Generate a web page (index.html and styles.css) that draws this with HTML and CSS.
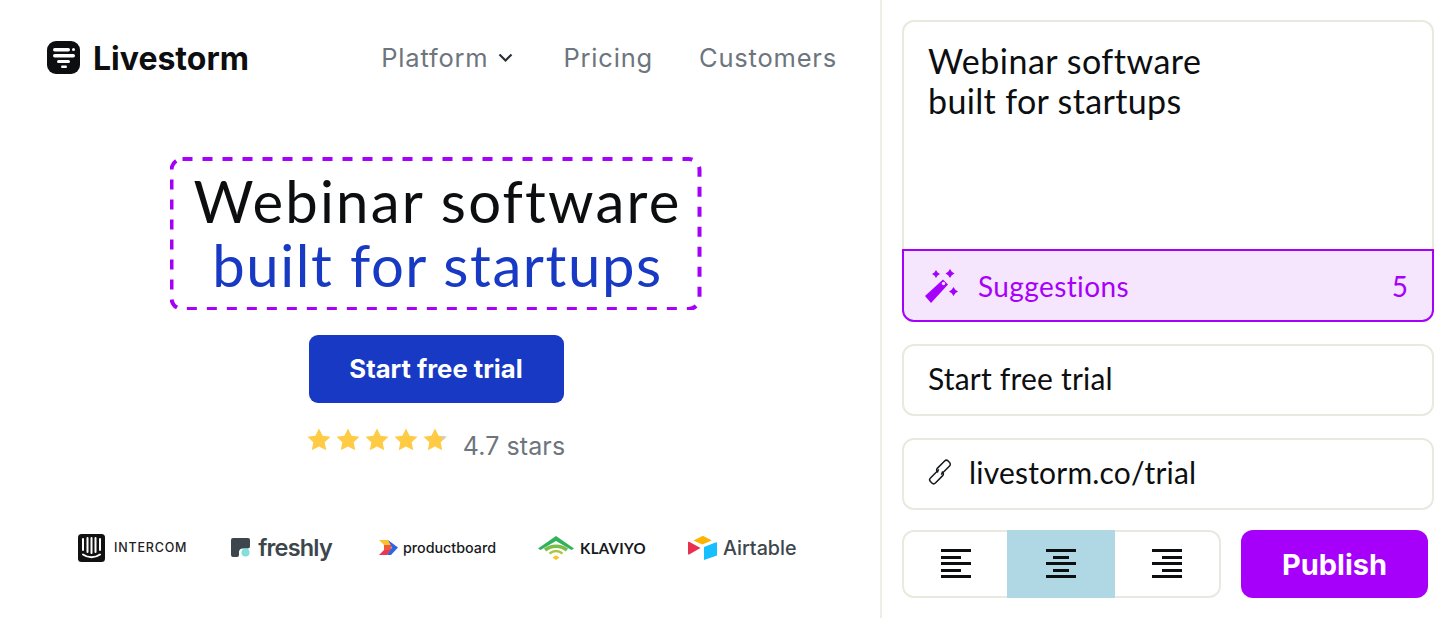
FILE: index.html
```html
<!doctype html>
<html lang="en">
  <head>
    <meta charset="UTF-8" />
    <meta name="viewport" content="width=device-width, initial-scale=1.0" />
    <title>Livestorm page editor</title>
    <link rel="stylesheet" href="styles.css">
  </head>
  <body>
    <div class="page">
      <section class="preview">
        <header class="nav">
          <div class="brand">
            <svg class="brand-icon" width="33" height="33" viewBox="0 0 33 33">
              <rect width="33" height="33" rx="9" fill="#0c0e10"/>
              <rect x="6" y="7" width="17" height="3.500" rx="1.700" fill="#fff"/>
              <rect x="25" y="7" width="3" height="3" rx="1.500" fill="#fff"/>
              <rect x="6" y="13" width="22" height="3.500" rx="1.700" fill="#fff"/>
              <rect x="10" y="19" width="13" height="3" rx="1.500" fill="#fff"/>
              <rect x="14" y="24.500" width="6" height="2.500" rx="1.200" fill="#fff"/>
            </svg>
            <span class="brand-name">Livestorm</span>
          </div>
          <nav class="nav-links">
            <a class="nav-link nav-platform">Platform
              <svg width="15" height="10" viewBox="0 0 15 10"><path d="M1.500 1.500 7.500 7.500l6-6" fill="none" stroke="#2b3036" stroke-width="2.200"/></svg>
            </a>
            <a class="nav-link">Pricing</a>
            <a class="nav-link">Customers</a>
          </nav>
        </header>

        <div class="hero">
          <div class="headline-box">
            <svg class="dashes" width="532" height="153" viewBox="0 0 532 153">
              <rect x="1.500" y="2" width="528" height="150" rx="11" fill="none" stroke="#a600fa" stroke-width="4" stroke-dasharray="10 10"/>
            </svg>
            <h1 class="headline">Webinar software<br><span class="headline-blue">built for startups</span></h1>
          </div>
          <a class="cta">Start free trial</a>
          <div class="rating">
            <svg class="stars" width="140" height="24" viewBox="0 0 140 24">
              <g fill="#ffcb45">
                <path d="M12 .500l3.600 7.300 7.900 1-5.800 5.500 1.500 8L12 18.400l-7.200 3.900 1.500-8L.500 8.800l7.900-1z"/>
                <path transform="translate(29)" d="M12 .500l3.600 7.300 7.900 1-5.800 5.500 1.500 8L12 18.400l-7.200 3.900 1.500-8L.500 8.800l7.900-1z"/>
                <path transform="translate(58)" d="M12 .500l3.600 7.300 7.900 1-5.800 5.500 1.500 8L12 18.400l-7.200 3.900 1.500-8L.500 8.800l7.900-1z"/>
                <path transform="translate(87)" d="M12 .500l3.600 7.300 7.900 1-5.800 5.500 1.500 8L12 18.400l-7.200 3.900 1.500-8L.500 8.800l7.900-1z"/>
                <path transform="translate(116)" d="M12 .500l3.600 7.300 7.900 1-5.800 5.500 1.500 8L12 18.400l-7.200 3.900 1.500-8L.500 8.800l7.900-1z"/>
              </g>
              <path transform="translate(116)" d="M19 6l.6 2 3.900.8-3.600 3.400z" fill="#c9ced6"/>
            </svg>
            <span class="rating-text">4.7 stars</span>
          </div>
        </div>

        <div class="logos">
          <div class="logo logo-intercom">
            <svg width="27" height="28" viewBox="0 0 27 28">
              <rect width="27" height="28" rx="3.500" fill="#111"/>
              <path d="M5 5v11M9.500 4v14M13.500 4v15M17.500 4v14M22 5v11" stroke="#fff" stroke-width="2" stroke-linecap="round"/>
              <path d="M5 20.500c5 3.600 12 3.600 17 0" fill="none" stroke="#fff" stroke-width="2" stroke-linecap="round"/>
            </svg>
            <span>INTERCOM</span>
          </div>
          <div class="logo logo-freshly">
            <svg width="19" height="19" viewBox="0 0 19 19">
              <path d="M2 0h15a2 2 0 0 1 2 2v6a2.500 2.500 0 0 1-2.500 2.500H12A3.500 3.500 0 0 0 8 14v3a2 2 0 0 1-2 2H2a2 2 0 0 1-2-2V2a2 2 0 0 1 2-2z" fill="#3c464c"/>
              <circle cx="14.500" cy="14.500" r="4" fill="#7fe0dc"/>
            </svg>
            <span>freshly</span>
          </div>
          <div class="logo logo-productboard">
            <svg width="19" height="15" viewBox="0 0 19 15">
              <path d="M0 0h9l4 5H5z" fill="#fbc02d"/>
              <path d="M0 15l5-5h7l-4 5z" fill="#e8384f"/>
              <path d="M5 5h8l-1 5H5z" fill="#f05a3c"/>
              <path d="M9 0l10 7.500L12 15H8l5-7.500z" fill="#2f66e0"/>
            </svg>
            <span>productboard</span>
          </div>
          <div class="logo logo-klaviyo">
            <svg width="36" height="24" viewBox="0 0 36 24">
              <path d="M0 12.500 18 0l18 12.500-2.500 1.500L18 5 2.500 14z" fill="#2eb35a"/>
              <path d="M7 14c6.500-5 15.500-5 22 0" fill="none" stroke="#7dbb4a" stroke-width="3.500"/>
              <path d="M11.500 17.500c4-3 9-3 13 0" fill="none" stroke="#a5c93c" stroke-width="2.500"/>
              <path d="M18 19.500l3.500 2-3.500 2.500-3.500-2.500z" fill="#fcc419"/>
            </svg>
            <span>KLAVIYO</span>
          </div>
          <div class="logo logo-airtable">
            <svg width="29" height="24" viewBox="0 0 29 24">
              <path d="M5.500 4.500 14 .3c.6-.3 1.200-.3 1.800 0l8 4.200-9.500 4z" fill="#fcb400"/>
              <path d="M16 11l12-4.800c.5-.2 1 .1 1 .7V19c0 .4-.2.7-.6.800L16 24z" fill="#18bfff"/>
              <path d="M0 6.500c0-.6.6-1 1.100-.7L12.500 12 1.100 18.500c-.5.300-1.100 0-1.100-.6z" fill="#e8304f"/>
            </svg>
            <span>Airtable</span>
          </div>
        </div>
      </section>

      <aside class="editor">
        <div class="field-stack">
          <div class="title-area">Webinar software<br><span class="title-second">built for startups</span></div>
          <div class="suggestions">
            <svg class="wand" width="36" height="36" viewBox="0 0 36 36">
              <g fill="#a600fa">
                <path d="M1 28 19 11.500l5 5L7 35z"/>
                <path d="M12 2l1.600 2.400L16 6l-2.400 1.600L12 10l-1.600-2.400L8 6l2.400-1.600z"/>
                <path d="M26 1l1.800 2.700L30.500 5.500l-2.700 1.800L26 10l-1.800-2.700L21.500 5.500l2.700-1.800z"/>
                <path d="M29.500 19l1.800 2.700 2.700 1.800-2.700 1.800-1.800 2.700-1.800-2.700-2.700-1.800 2.700-1.800z"/>
              </g>
              <circle cx="19.500" cy="15.500" r="1.700" fill="#f5e6fd"/>
            </svg>
            <span class="suggestions-label">Suggestions</span>
            <span class="suggestions-count">5</span>
          </div>
        </div>

        <div class="field field-text">Start free trial</div>

        <div class="field field-link">
          <svg width="26" height="26" viewBox="0 0 26 26" fill="none" stroke="#16191c" stroke-width="1.500">
            <g transform="rotate(-45 13 13)">
              <path d="M14 10.500H2a2.500 2.500 0 0 0-2.500 2.500v2A2.500 2.500 0 0 0 2 17.500h10a2.500 2.500 0 0 0 2.500-2.500v-1"/>
              <path d="M12 15.500h12a2.500 2.500 0 0 0 2.500-2.500v-2A2.500 2.500 0 0 0 24 8.500H14a2.500 2.500 0 0 0-2.500 2.500v1"/>
            </g>
          </svg>
          <span>livestorm.co/trial</span>
        </div>

        <div class="toolbar">
          <div class="align-group">
            <div class="align-btn">
              <svg width="30" height="30" viewBox="0 0 30 30" fill="#0c0e10"><rect y="0" width="30" height="3"/><rect y="7" width="20" height="3"/><rect y="13" width="30" height="3"/><rect y="20" width="20" height="3"/><rect y="26" width="30" height="3"/></svg>
            </div>
            <div class="align-btn align-active">
              <svg width="30" height="30" viewBox="0 0 30 30" fill="#0c0e10"><rect y="0" width="30" height="3"/><rect x="7" y="7" width="16" height="3"/><rect y="13" width="30" height="3"/><rect x="7" y="20" width="16" height="3"/><rect y="26" width="30" height="3"/></svg>
            </div>
            <div class="align-btn">
              <svg width="30" height="30" viewBox="0 0 30 30" fill="#0c0e10"><rect y="0" width="30" height="3"/><rect x="10" y="7" width="20" height="3"/><rect y="13" width="30" height="3"/><rect x="10" y="20" width="20" height="3"/><rect y="26" width="30" height="3"/></svg>
            </div>
          </div>
          <button class="publish">Publish</button>
        </div>
      </aside>
    </div>
  </body>
</html>
```

FILE: styles.css
```css
* {
  margin: 0;
  padding: 0;
  box-sizing: border-box;
}

html, body {
  height: 618px;
  overflow: hidden;
}

body {
  background: #fff;
  font-family: 'Lato', sans-serif;
  color: #0c0e10;
}

.page {
  display: flex;
  height: 618px;
}

/* left side, the page preview */
.preview {
  width: 882px;
  border-right: 2px solid #eeeee6;
}

.nav {
  display: flex;
  align-items: center;
  justify-content: space-between;
  height: 74px;
  padding: 41px 43px 0 47px;
}

.brand {
  display: flex;
  align-items: center;
  gap: 13px;
}

.brand-name {
  padding-top: 2px;
  font-family: 'Inter', sans-serif;
  font-size: 32px;
  font-weight: 700;
  line-height: 31px;
}

.nav-links {
  display: flex;
  align-items: center;
  gap: 46px;
}

.nav-link {
  font-family: 'Inter', sans-serif;
  font-size: 25.500px;
  line-height: 33px;
  color: #6d757d;
  letter-spacing: 0.8px;
}

.nav-platform {
  display: flex;
  align-items: center;
  gap: 10px;
  margin-right: 4px;
}

.hero {
  display: flex;
  flex-direction: column;
  align-items: center;
  margin-top: 83px;
  padding-right: 8px;
}

.headline-box {
  position: relative;
  width: 532px;
  height: 153px;
  padding: 0 0 1px 3px;
  display: flex;
  align-items: center;
  justify-content: center;
}

.dashes {
  position: absolute;
  top: 0;
  left: 0;
}

.headline {
  font-family: 'Lato', sans-serif;
  font-size: 58px;
  font-weight: 400;
  line-height: 64px;
  text-align: center;
  letter-spacing: 2.200px;
  color: #0c0e10;
}

.headline-blue {
  color: #1739c4;
  letter-spacing: 1.600px;
}

.cta {
  display: flex;
  align-items: center;
  justify-content: center;
  width: 255px;
  height: 68px;
  margin-top: 25px;
  padding-bottom: 2px;
  background: #1739c4;
  border-radius: 9px;
  color: #fff;
  font-family: 'Inter', sans-serif;
  font-size: 25.700px;
  font-weight: 700;
}

.rating {
  display: flex;
  align-items: flex-start;
  gap: 16px;
  margin-top: 25px;
}

.rating-text {
  margin-top: 3px;
  font-family: 'Inter', sans-serif;
  font-size: 25px;
  line-height: 30px;
  letter-spacing: 0.100px;
  color: #6d757d;
}

.logos {
  display: flex;
  align-items: center;
  margin-top: 72px;
  padding-left: 78px;
}

.logo {
  display: flex;
  align-items: center;
}

.logo-intercom {
  gap: 9px;
  font-family: 'Inter', sans-serif;
  font-size: 12.500px;
  font-weight: 500;
  letter-spacing: 0.800px;
  color: #222;
}

.logo-freshly {
  gap: 8px;
  margin-left: 44px;
  font-family: 'Inter', sans-serif;
  font-size: 23.500px;
  font-weight: 600;
  letter-spacing: -0.800px;
  color: #3c464c;
}

.logo-productboard {
  gap: 5px;
  margin-left: 47px;
  font-family: 'Inter', sans-serif;
  font-size: 14.300px;
  font-weight: 500;
  color: #16191c;
}

.logo-klaviyo {
  gap: 6px;
  margin-left: 42px;
  font-family: 'Lato', sans-serif;
  font-size: 15px;
  font-weight: 700;
  letter-spacing: 0.300px;
  color: #16191c;
}

.logo-airtable {
  gap: 6px;
  margin-left: 42px;
  font-family: 'Inter', sans-serif;
  font-size: 19.700px;
  font-weight: 500;
  color: #3c464c;
}

/* right side, the form */
.editor {
  width: 532px;
  margin-left: 20px;
  padding-top: 20px;
}

.field-stack {
  margin-bottom: 22px;
}

.title-area {
  height: 229px;
  padding: 19px 24px;
  border: 2px solid #e9e9e0;
  border-bottom: 0;
  border-radius: 12px 12px 0 0;
  font-size: 34px;
  line-height: 40px;
  letter-spacing: 0.500px;
}

.title-second {
  letter-spacing: 0.350px;
}

.suggestions {
  display: flex;
  align-items: center;
  height: 73px;
  padding: 0 24px 0 20px;
  background: #f5e6fd;
  border: 2px solid #a600fa;
  border-radius: 0 0 12px 12px;
  color: #a600fa;
  font-size: 28px;
}

.suggestions-label {
  margin-left: 18px;
  letter-spacing: 0.400px;
}

.suggestions-count {
  margin-left: auto;
}

.field {
  display: flex;
  align-items: center;
  height: 72px;
  margin-bottom: 22px;
  padding: 0 24px 5px;
  border: 2px solid #e9e9e0;
  border-radius: 12px;
  font-size: 30px;
  letter-spacing: 0.200px;
}

.field-link {
  gap: 16px;
  margin-bottom: 20px;
  padding-left: 23px;
}

.toolbar {
  display: flex;
  gap: 20px;
}

.align-group {
  display: grid;
  grid-template-columns: 103px 108px 1fr;
  width: 319px;
  height: 68px;
  border: 2px solid #e9e9e0;
  border-radius: 12px;
}

.align-btn {
  display: flex;
  align-items: center;
  justify-content: center;
  margin: -2px 0;
}

.align-active {
  background: #b0d8e4;
}

.publish {
  width: 187px;
  height: 68px;
  border: none;
  border-radius: 12px;
  background: #a600fa;
  color: #fff;
  font-family: 'Inter', sans-serif;
  font-size: 29px;
  font-weight: 700;
}
```
